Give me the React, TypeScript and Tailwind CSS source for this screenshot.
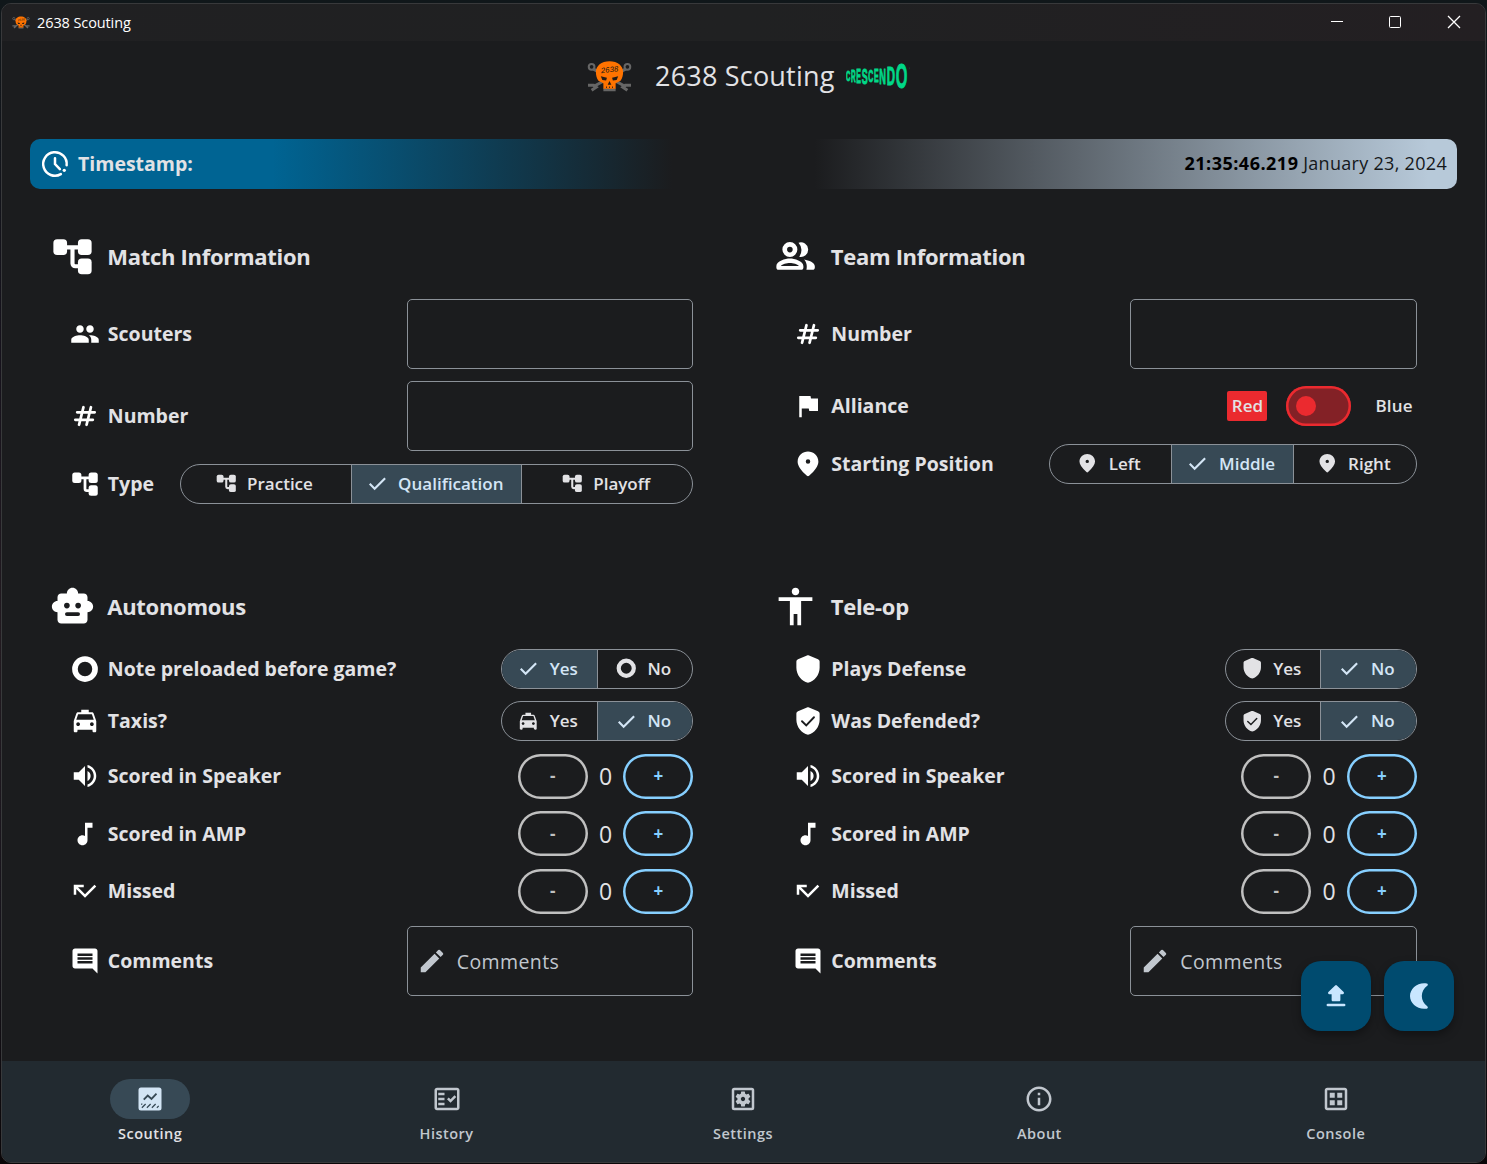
import React from "react";
import {
  MdAccessibility,
  MdCallMissed,
  MdComment,
  MdEdit,
  MdFlag,
  MdInfoOutline,
  MdLocalTaxi,
  MdMusicNote,
  MdOutlineDataset,
  MdOutlineFactCheck,
  MdOutlineSettingsApplications,
  MdPeople,
  MdVolumeUp,
} from "react-icons/md";

type IconProps = { className?: string };
type Icon = React.ComponentType<IconProps>;

const Tree: Icon = ({ className }) => (
  <svg viewBox="0 0 24 24" className={className} fill="currentColor">
    <rect x="1.8" y="2.8" width="7.3" height="8.4" rx="2" />
    <rect x="14.9" y="2.8" width="7.3" height="8.4" rx="2" />
    <rect x="14.9" y="13" width="7.3" height="8.4" rx="2" />
    <path d="M8 7.100h8M12 7v8.700a1.500 1.500 0 0 0 1.500 1.500H16" fill="none" stroke="currentColor" strokeWidth="2.200" />
  </svg>
);

const Hash: Icon = ({ className }) => (
  <svg viewBox="0 0 24 24" className={className} fill="none" stroke="currentColor" strokeWidth="2.200" strokeLinecap="round">
    <path d="M10.75 5 7.25 19M16.75 5l-3.5 14M5.75 9h14M4.25 15h14" />
  </svg>
);

const Pin: Icon = ({ className }) => (
  <svg viewBox="0 0 24 24" className={className} fill="currentColor">
    <path d="M12 2C7.800 2 3.700 5.220 3.700 10.200c0 3.180 2.550 6.920 7.440 11.230.49.43 1.240.43 1.730 0C17.750 17.120 20.300 13.380 20.300 10.200 20.300 5.220 16.200 2 12 2zm0 9.800a1.800 1.800 0 1 1 0-3.600 1.800 1.800 0 0 1 0 3.600z" />
  </svg>
);

const Ring: Icon = ({ className }) => (
  <svg viewBox="0 0 24 24" className={className} fill="none" stroke="currentColor" strokeWidth="4.500">
    <circle cx="12" cy="12" r="8.050" />
  </svg>
);

const Check: Icon = ({ className }) => (
  <svg viewBox="0 0 24 24" className={className} fill="none" stroke="currentColor" strokeWidth="2.300">
    <path d="m4 12.600 5.200 5.200L20.400 6.600" />
  </svg>
);

const Team: Icon = ({ className }) => (
  <svg viewBox="0 0 24 24" className={className} fill="currentColor">
    <circle cx="9" cy="8.300" r="2.750" fill="none" stroke="currentColor" strokeWidth="2.500" />
    <path fillRule="evenodd" d="M9 13c-2.400 0-7.200 1.300-7.200 4.100V18c0 .6.5 1.100 1.100 1.100h12.200c.6 0 1.100-.5 1.100-1.100v-.9C16.200 14.300 11.400 13 9 13zm-4.800 4c.8-.8 3-1.500 4.800-1.500s4 .7 4.800 1.500z" />
    <path d="M13.600 4.600a3.900 3.900 0 1 1 .4 7.500 5.900 5.900 0 0 0-.4-7.500z" />
    <path d="M16.600 13.600c2.600.5 5.700 1.600 5.700 3.600V18c0 .6-.5 1.100-1.100 1.100h-3.400c.2-.5.2-1.300.2-2 0-1.400-.6-2.600-1.400-3.500z" />
  </svg>
);

const Shield: Icon = ({ className }) => (
  <svg viewBox="0 0 24 24" className={className} fill="currentColor">
    <path d="m11.190 1.160-7.200 3.110C3.270 4.590 2.700 5.310 2.700 6.100V11c0 5.550 4 10.740 9.300 12 5.300-1.260 9.300-6.450 9.300-12V6.100c0-.79-.57-1.510-1.290-1.830l-7.200-3.110c-.51-.23-1.110-.23-1.620 0z" />
  </svg>
);

const ShieldCheck: Icon = ({ className }) => (
  <svg viewBox="0 0 24 24" className={className}>
    <path fill="currentColor" d="m11.190 1.160-7.200 3.110C3.270 4.590 2.700 5.310 2.700 6.100V11c0 5.550 4 10.740 9.300 12 5.300-1.260 9.300-6.450 9.300-12V6.100c0-.79-.57-1.510-1.290-1.830l-7.200-3.110c-.51-.23-1.110-.23-1.620 0z" />
    <path d="m7.200 12.200 3.400 3.300 6.200-6.500" fill="none" stroke="#1b1c1e" strokeWidth="1.500" strokeLinecap="round" />
  </svg>
);

const Robot: Icon = ({ className }) => (
  <svg viewBox="0 0 24 24" className={className}>
    <path fill="currentColor" d="M20 9V7c0-1.100-.9-2-2-2h-3c0-1.660-1.340-3-3-3S9 3.340 9 5H6c-1.100 0-2 .9-2 2v2c-1.660 0-3 1.340-3 3s1.340 3 3 3v4c0 1.100.9 2 2 2h12c1.100 0 2-.9 2-2v-4c1.660 0 3-1.340 3-3s-1.340-3-3-3z" />
    <g fill="#1b1c1e">
      <circle cx="9" cy="11.500" r="1.500" />
      <circle cx="15" cy="11.500" r="1.500" />
      <rect x="8" y="15" width="8" height="2" rx="1" />
    </g>
  </svg>
);

const Clock: Icon = ({ className }) => (
  <svg viewBox="0 0 24 24" className={className} fill="none" stroke="currentColor" strokeWidth="2" strokeLinecap="round">
    <path d="M21.300 13A9.400 9.400 0 1 0 16.700 20.100" />
    <path d="M12 7.300V12l3.900 4.100" />
    <circle cx="19.400" cy="17" r="1.300" fill="currentColor" stroke="none" />
  </svg>
);

const Upload: Icon = ({ className }) => (
  <svg viewBox="0 0 24 24" className={className} fill="currentColor">
    <path d="M9.500 16.200h5c.55 0 1-.45 1-1V10.500h1.900c.89 0 1.340-1.080.71-1.710L12.710 3.500a1 1 0 0 0-1.410 0L5.910 8.790c-.63.63-.19 1.710.7 1.710H8.500v4.700c0 .55.45 1 1 1zm-4 1.900h13a1.050 1.050 0 0 1 0 2.100h-13a1.050 1.050 0 0 1 0-2.100z" />
  </svg>
);

const Moon: Icon = ({ className }) => (
  <svg viewBox="0 0 24 24" className={className} fill="currentColor">
    <path d="M18.200 1.900C11 .7 4.800 5.900 4.800 12S11 23.300 18.200 22.100c1-.2 1.200-1.300.4-1.900A9.900 9.900 0 0 1 18.600 3.800c.8-.6.600-1.700-.4-1.900z" />
  </svg>
);

const Chart: Icon = ({ className }) => (
  <svg viewBox="0 0 24 24" className={className}>
    <rect x="2.800" y="2.800" width="18.400" height="18.400" rx="2" fill="currentColor" />
    <g fill="none" stroke="#374955">
      <path d="m7 12.500 3.200-3.300 3 2.700 4-4.200" strokeWidth="1.500" />
      <path d="m5.500 19 3-3M9.500 19l3-3M13.500 19l3-3M17.500 19l1.500-1.500M5 16.500l.8-.8" strokeWidth="1" />
    </g>
  </svg>
);

const Skull: Icon = ({ className }) => (
  <svg viewBox="0 0 44 30" className={className}>
    <g fill="none" stroke="#666" strokeWidth="3">
      <path d="M6 7.500 38 25M38 7.500 6 25" />
      <circle cx="4.500" cy="5.500" r="2.800" strokeWidth="2" />
      <circle cx="39.500" cy="5.500" r="2.800" strokeWidth="2" />
      <path d="M1 23.500h5.500l2.500 2-4.500 3M43 23.500h-5.500l-2.500 2 4.500 3" />
      <path d="M16 28h12" />
    </g>
    <path fill="#ff7300" d="M22 .2c8 0 13.300 4.500 13.300 10.500 0 3-.6 6-2.500 8.500l-4.800 2.500v5.300H16v-5.300l-4.800-2.500C9.300 16.700 8.700 13.700 8.700 10.700 8.700 4.700 14 .2 22 .2z" />
    <g fill="#241c16">
      <path d="m13.500 14.800 6 1.500-.8 2.600-3.700-.4zM30.500 14.800l-6 1.500.8 2.600 3.700-.4zM22 19.500l1.800 3.500h-3.600z" />
      <path d="M18.600 24.800h.8v1.400h-.8zM21.600 24.800h.8v1.400h-.8zM24.600 24.800h.8v1.400h-.8z" />
      <text x="13.500" y="10.800" fontSize="7.500" fontStyle="italic" fontFamily="Liberation Sans, sans-serif" textLength="17" transform="rotate(-7 22 8)">
        2638
      </text>
    </g>
  </svg>
);

/* Wordmark letters: glyph, advance in ems, left edge, width, top, bottom */
const WORDMARK: [string, number, number, number, number, number][] = [
  ["C", 0.722, 0, 13, 26, 58],
  ["R", 0.722, 15, 14, 24, 60],
  ["E", 0.667, 31, 14, 20, 62],
  ["S", 0.667, 47, 18, 17, 66],
  ["C", 0.722, 67, 15, 22, 59],
  ["E", 0.667, 84, 14, 20, 61],
  ["N", 0.722, 100, 20, 17, 66],
  ["D", 0.722, 122, 25, 15, 69],
  ["O", 0.778, 149, 35, 3, 78],
];

function Crescendo({ className }: IconProps) {
  return (
    <svg viewBox="0 -30 195 142" className={className} fill="#00d888" stroke="#00d888" strokeWidth="3" fontFamily="Liberation Sans, sans-serif" fontWeight="700">
      {WORDMARK.map(([ch, advance, x, w, top, bottom], i) => {
        const size = (bottom - top) / 0.72;
        return (
          <text key={i} fontSize={size} transform={`translate(${x} ${bottom}) scale(${w / (advance * size)} 1)`}>
            {ch}
          </text>
        );
      })}
      <circle cx="191" cy="18" r="1" stroke="none" />
    </svg>
  );
}

function Section({ icon: I, title, children }: { icon: Icon; title: string; children: React.ReactNode }) {
  return (
    <section className="flex flex-col gap-[12.5px] pl-[30px] pr-[50px]">
      <div className="flex h-[59px] items-center gap-[12.5px] pb-px">
        <I className="size-[45px] text-white" />
        <h2 className="text-[22px] font-bold tracking-[-0.3px]">{title}</h2>
      </div>
      {children}
    </section>
  );
}

function Row({ icon: I, label, children }: { icon: Icon; label: string; children: React.ReactNode }) {
  return (
    <div className="flex items-center justify-between pl-5">
      <div className="flex items-center gap-[8px]">
        <I className="size-[30px] text-white" />
        <span className="whitespace-nowrap text-[19.5px] leading-[30px] font-bold">{label}</span>
      </div>
      {children}
    </div>
  );
}

function Field({ comments = false }: { comments?: boolean }) {
  return (
    <div className="flex h-[70px] w-[286.5px] items-center gap-[10px] rounded-[5px] border border-[#8b9198] pl-[9px] text-[#c1c7ce]">
      {comments && (
        <>
          <MdEdit className="size-[30px]" />
          <span className="text-[19.5px] tracking-[0.4px]">Comments</span>
        </>
      )}
    </div>
  );
}

function Segments({ items, selected, icon: I, className }: { items: string[]; selected: number; icon: Icon; className: string }) {
  return (
    <div className={"flex h-10 overflow-hidden rounded-full border border-[#8b9198] " + className}>
      {items.map((t, i) => (
        <div
          key={t}
          className={
            "flex flex-1 items-center justify-center gap-[10px] pr-[4px] text-[17px] font-semibold " +
            (i ? "border-l border-[#8b9198] " : "") +
            (i === selected ? "bg-[#374955] text-[#d3e5f5]" : "text-[#e2e2e5]")
          }
        >
          {i === selected ? <Check className="size-[22.5px]" /> : <I className="size-[22.5px]" />}
          <span>{t}</span>
        </div>
      ))}
    </div>
  );
}

function Counter() {
  return (
    <div className="flex h-[45px] items-center">
      <div className="flex h-[45px] w-[70px] items-center justify-center rounded-full text-[17px] font-bold text-[#c0c0c0] shadow-[inset_0_0_0_2.5px_#c0c0c0]">-</div>
      <span className="w-[35.5px] pt-px text-center text-[23px] font-medium">0</span>
      <div className="flex h-[45px] w-[70px] items-center justify-center rounded-full text-[17px] font-bold text-[#86cfff] shadow-[inset_0_0_0_2.5px_#86cfff]">+</div>
    </div>
  );
}

const NAV: [string, Icon][] = [
  ["Scouting", Chart],
  ["History", MdOutlineFactCheck],
  ["Settings", MdOutlineSettingsApplications],
  ["About", MdInfoOutline],
  ["Console", MdOutlineDataset],
];

const YES_NO = ["Yes", "No"];

export default function App() {
  return (
    <div className="relative h-[1164px] w-[1487px] overflow-hidden bg-[linear-gradient(#10171a_0%,#16121c_30%,#221a20_55%,#17141c_80%,#0a0608_100%)] pt-[3px] pl-px font-['Open_Sans',sans-serif] text-[#e2e2e5]">
      <div className="relative flex h-[1160px] w-[1485px] flex-col overflow-hidden rounded-[10px] border border-[#38393b] bg-[#1b1c1e]">
        <header className="flex h-[37px] shrink-0 items-center justify-between bg-linear-to-r from-[#202022] via-[#202122] to-[#231f22] pl-[10px] text-white">
          <div className="flex items-center gap-[7px]">
            <Skull className="h-[13px] w-[18px]" />
            <span className="text-[14.500px] tracking-[-0.1px]">2638 Scouting</span>
          </div>
          <svg viewBox="0 0 150 14" className="mr-[15px] mb-[2px] h-[14px] w-[150px]" fill="none" stroke="currentColor">
            <path d="M11 6.500h12" />
            <path d="M128 1l12 12M140 1l-12 12" strokeWidth="1.300" />
            <rect x="69.500" y="1.500" width="11" height="11" rx="1" />
          </svg>
        </header>

        <div className="flex h-[98px] shrink-0 items-start pt-[20px] pl-[585px]">
          <Skull className="h-[31px] w-[45px]" />
          <h1 className="ml-[23px] w-[180px] text-[27px] leading-[30px] tracking-[0.2px] whitespace-nowrap">2638 Scouting</h1>
          <Crescendo className="-mt-[9px] ml-[11px] h-[47.3px] w-[65px]" />
        </div>

        <div className="mx-7 flex h-[50px] shrink-0 items-center justify-between rounded-[10px] bg-[linear-gradient(90deg,#006493_0%,#006493_17%,#1b1c1e_45%,#1b1c1e_55%,#b7c9d9_98%)] px-[10px]">
          <div className="flex items-center gap-[8px]">
            <Clock className="size-[30px] text-white" />
            <span className="text-[19.5px] font-bold">Timestamp:</span>
          </div>
          <div className="pb-px text-[18px] text-black">
            <span className="font-bold tracking-[0.5px]">21:35:46.219</span> <span className="tracking-[0.3px] text-[#15181b]">January 23, 2024</span>
          </div>
        </div>

        <main className="ml-[17.8px] grid grow grid-cols-[723.5px_723.5px] grid-rows-[350px_1fr] pt-[38.2px]">
          <Section icon={Tree} title="Match Information">
            <Row icon={MdPeople} label="Scouters"><Field /></Row>
            <Row icon={Hash} label="Number"><Field /></Row>
            <Row icon={Tree} label="Type">
              <Segments items={["Practice", "Qualification", "Playoff"]} selected={1} icon={Tree} className="w-[513.5px]" />
            </Row>
          </Section>
          <Section icon={Team} title="Team Information">
            <Row icon={Hash} label="Number"><Field /></Row>
            <Row icon={MdFlag} label="Alliance">
              <div className="flex h-[50px] items-center text-[17px] font-semibold">
                <span className="flex h-[30px] w-10 items-center justify-center rounded-[2px] bg-[#eb2a2f]">Red</span>
                <div className="mx-[19px] flex h-10 w-[65px] items-center rounded-full bg-[#832126] pl-[10px] shadow-[inset_0_0_0_2.5px_#eb2a2f]">
                  <div className="size-5 rounded-full bg-[#eb2a2f]" />
                </div>
                <span className="mr-[4px] ml-[5px] tracking-[0.2px]">Blue</span>
              </div>
            </Row>
            <Row icon={Pin} label="Starting Position">
              <Segments items={["Left", "Middle", "Right"]} selected={1} icon={Pin} className="w-[368px]" />
            </Row>
          </Section>
          <Section icon={Robot} title="Autonomous">
            <Row icon={Ring} label="Note preloaded before game?">
              <Segments items={YES_NO} selected={0} icon={Ring} className="w-[192px]" />
            </Row>
            <Row icon={MdLocalTaxi} label="Taxis?">
              <Segments items={YES_NO} selected={1} icon={MdLocalTaxi} className="w-[192px]" />
            </Row>
            <Row icon={MdVolumeUp} label="Scored in Speaker"><Counter /></Row>
            <Row icon={MdMusicNote} label="Scored in AMP"><Counter /></Row>
            <Row icon={MdCallMissed} label="Missed"><Counter /></Row>
            <Row icon={MdComment} label="Comments"><Field comments /></Row>
          </Section>
          <Section icon={MdAccessibility} title="Tele-op">
            <Row icon={Shield} label="Plays Defense">
              <Segments items={YES_NO} selected={1} icon={Shield} className="w-[192px]" />
            </Row>
            <Row icon={ShieldCheck} label="Was Defended?">
              <Segments items={YES_NO} selected={1} icon={ShieldCheck} className="w-[192px]" />
            </Row>
            <Row icon={MdVolumeUp} label="Scored in Speaker"><Counter /></Row>
            <Row icon={MdMusicNote} label="Scored in AMP"><Counter /></Row>
            <Row icon={MdCallMissed} label="Missed"><Counter /></Row>
            <Row icon={MdComment} label="Comments"><Field comments /></Row>
          </Section>
        </main>

        <div className="absolute right-[31.5px] bottom-[131px] flex gap-[12.5px] text-[#c9e6ff]">
          <div className="flex size-[70px] items-center justify-center rounded-[20px] bg-[#004b6f] shadow-[0_4px_8px_rgba(0,0,0,0.35)]">
            <Upload className="size-[30px]" />
          </div>
          <div className="flex size-[70px] items-center justify-center rounded-[20px] bg-[#004b6f] shadow-[0_4px_8px_rgba(0,0,0,0.35)]">
            <Moon className="size-[30px]" />
          </div>
        </div>

        <nav className="grid h-[101px] shrink-0 grid-cols-5 bg-[#222a30] pt-[18px] pr-px">
          {NAV.map(([label, I], i) => (
            <div key={label} className={"flex flex-col items-center gap-[5px] text-[14.500px] font-semibold tracking-[0.5px] " + (i ? "text-[#c1c7ce]" : "text-[#e2e2e5]")}>
              <div className={"flex h-10 w-20 items-center justify-center rounded-full " + (i ? "" : "bg-[#374955] text-[#d3e5f5]")}>
                <I className="size-[30px]" />
              </div>
              <span className="leading-5">{label}</span>
            </div>
          ))}
        </nav>
      </div>
    </div>
  );
}
